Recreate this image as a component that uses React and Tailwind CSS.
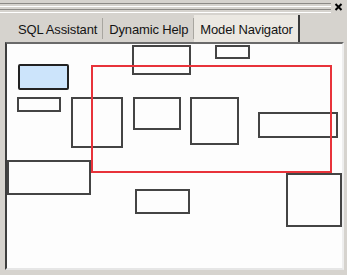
const nodes = [
  { l: 11, t: 20, w: 51, h: 26, blue: true },
  { l: 10, t: 53, w: 44, h: 15 },
  { l: 64, t: 53, w: 52, h: 51 },
  { l: 125, t: 1, w: 59, h: 30 },
  { l: 208, t: 1, w: 35, h: 14 },
  { l: 126, t: 53, w: 48, h: 33 },
  { l: 183, t: 53, w: 49, h: 48 },
  { l: 251, t: 68, w: 80, h: 26 },
  { l: 0, t: 116, w: 84, h: 35 },
  { l: 128, t: 145, w: 55, h: 25 },
];

const App = () => {
  return (
    <div
      className="w-[347px] h-[275px] bg-[#d6d3ce] flex flex-col overflow-hidden"
      style={{ fontFamily: '"Liberation Sans", Arial, sans-serif' }}
    >
      {/* Gripper bar */}
      <div className="h-[14px] flex items-start gap-[3px] pt-[2px] pr-[4px]">
        <div className="flex-1 flex flex-col gap-[2px] pt-[1px]">
          <div className="h-[1px] bg-[#8c8a86]" />
          <div className="h-[1px] bg-white" />
          <div className="h-[1px] bg-[#8c8a86]" />
          <div className="h-[1px] bg-white" />
        </div>
        <svg width="9" height="8" viewBox="0 0 9 8" className="mt-[1px]">
          <path d="M1.5 1 L7.5 7 M7.5 1 L1.5 7" stroke="#000" strokeWidth="2" />
        </svg>
      </div>

      {/* Tabs */}
      <div className="h-[27px] flex items-stretch pl-[12px] mt-[1px] text-[13px] tracking-[-0.15px] text-[#141414]">
        <div className="flex items-center pl-[6px] pr-[5px] pt-[2px]">SQL Assistant</div>
        <div className="w-[1px] my-[3px] bg-[#a8a6a0]" />
        <div className="flex items-center pl-[6px] pr-[5px] pt-[2px]">Dynamic Help</div>
        <div className="w-[1px] my-[3px] bg-[#a8a6a0]" />
        <div className="flex items-center pl-[6px] pr-[5px] pt-[2px] bg-[#ebe8e2] border-r-2 border-[#3a3a3a]">
          Model Navigator
        </div>
      </div>

      {/* Diagram canvas */}
      <div className="ml-[5px] mr-[3px] mb-[5px] flex-1 border-l-2 border-t-2 border-r-2 border-b-2 border-l-[#3e3e3e] border-t-[#6a6a6a] border-r-[#eeeeee] border-b-[#e6e6e6] bg-[#fdfdfd] relative">
        {nodes.map((n, i) => (
          <div
            key={i}
            className={`absolute border-2 ${n.blue ? 'bg-[#cce4fb] rounded-[2px] border-[#222]' : 'border-[#444]'}`}
            style={{ left: n.l, top: n.t, width: n.w, height: n.h }}
          />
        ))}
        <div
          className="absolute border-2 border-[#e8333a]"
          style={{ left: 84, top: 21, width: 241, height: 108 }}
        />
        <div
          className="absolute border-2 border-[#444] bg-[#fdfdfd]"
          style={{ left: 279, top: 129, width: 56, height: 54 }}
        />
      </div>
    </div>
  );
};

export default App;
